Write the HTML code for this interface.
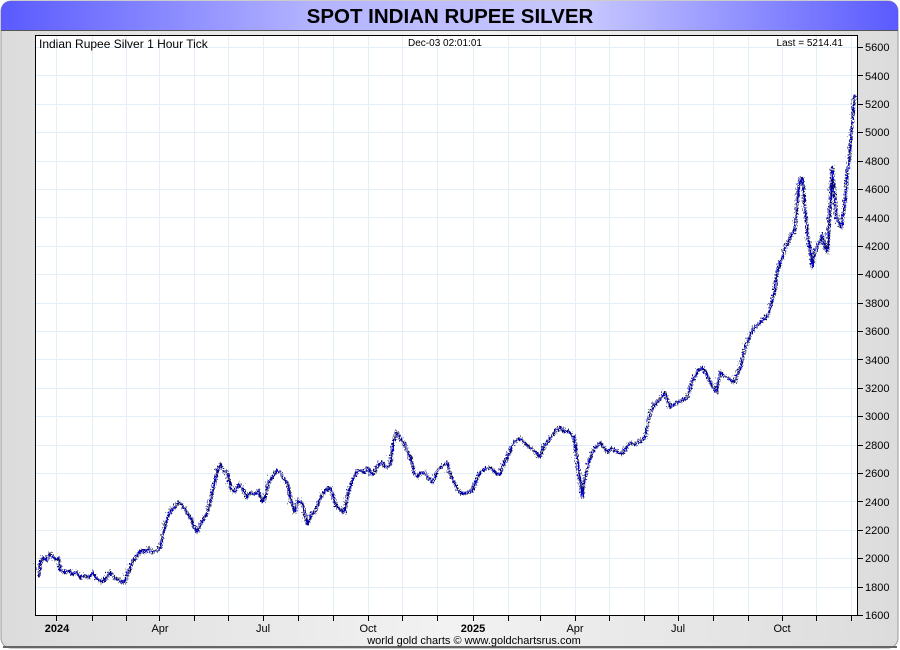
<!DOCTYPE html>
<html><head><meta charset="utf-8"><style>
html,body{margin:0;padding:0;width:900px;height:650px;overflow:hidden;background:#fff;font-family:"Liberation Sans",Arial,sans-serif}
</style></head><body>
<svg width="900" height="650" xmlns="http://www.w3.org/2000/svg" font-family="Liberation Sans, Arial, sans-serif">
<defs>
<linearGradient id="tb" x1="0" x2="1" y1="0" y2="0">
<stop offset="0" stop-color="#5a5aff"/><stop offset="0.35" stop-color="#b4b4ff"/><stop offset="0.65" stop-color="#c8c8ff"/><stop offset="1" stop-color="#5a5aff"/></linearGradient>
<linearGradient id="bg" x1="0" x2="1" y1="0" y2="0">
<stop offset="0" stop-color="#dcdcdc"/><stop offset="0.5" stop-color="#f2f2f2"/><stop offset="1" stop-color="#dcdcdc"/></linearGradient>
<filter id="jit" x="-5%" y="-10%" width="110%" height="120%">
<feTurbulence type="turbulence" baseFrequency="0.9 0.35" numOctaves="1" seed="3" result="n"/>
<feDisplacementMap in="SourceGraphic" in2="n" scale="7" xChannelSelector="R" yChannelSelector="G"/>
</filter>
<polyline id="p" points="36,575 38,560 41,555 44,558 47,552 50,553 53,557 56,555 58,567 62,570 66,568 70,572 74,570 78,576 82,573 86,575 90,570 94,576 98,578 100,580 104,575 108,570 112,575 116,578 122,580 126,570 130,560 134,555 138,548 142,550 146,546 150,550 154,548 158,545 161,530 165,515 169,508 172,505 176,500 180,502 184,510 188,515 192,525 195,530 199,520 205,510 209,495 212,480 215,468 218,462 221,468 225,470 228,485 232,490 236,482 240,485 244,495 248,490 252,492 256,488 260,500 262,497 266,480 270,475 274,468 278,470 282,478 285,480 289,500 292,510 296,498 300,500 303,515 305,522 309,512 312,510 316,500 320,492 324,488 328,485 331,495 335,505 339,508 342,510 346,490 350,478 354,470 358,468 362,470 365,465 369,472 372,470 376,462 380,460 384,465 388,462 391,440 395,430 399,438 402,440 405,450 408,455 412,470 415,475 419,470 422,470 426,476 430,480 434,470 438,465 442,462 445,460 448,472 452,480 456,488 460,492 465,490 470,488 474,478 478,470 483,466 488,465 492,470 497,472 501,462 505,455 509,445 512,440 516,436 520,438 524,442 528,445 533,450 538,455 541,445 545,440 549,434 552,430 555,428 558,425 562,430 565,428 569,432 572,435 575,460 578,480 580,495 582,478 585,465 588,455 590,450 594,444 598,440 602,446 605,450 609,446 612,448 616,450 620,452 624,445 628,440 632,442 636,440 640,438 643,435 645,422 648,410 652,402 655,400 659,395 662,390 665,398 668,405 671,402 675,400 680,398 685,395 689,382 692,375 696,368 700,365 704,372 708,380 711,385 714,390 716,378 718,370 722,374 725,375 729,378 732,380 735,372 738,365 741,352 745,340 749,330 752,325 756,322 760,318 763,315 766,312 769,300 772,290 775,270 778,258 780,255 783,245 786,240 789,232 792,230 794,210 796,185 798,178 800,175 802,200 805,230 808,250 810,265 812,250 815,245 818,238 820,232 822,242 825,250 828,200 830,165 832,190 834,215 836,220 839,225 841,210 843,195 845,170 847,155 849,125 850,120 851,105 852,95 853,93"/>
</defs>
<rect x="0" y="0" width="900" height="650" fill="#fff"/>
<rect x="1" y="1" width="897" height="647" rx="10" fill="url(#bg)" stroke="#999" stroke-width="1"/>
<path d="M1,648 L1,12 Q1,1 12,1 L887,1 Q898,1 898,12 L898,30 L1,30 Z" fill="url(#tb)"/>
<line x1="1" y1="30.5" x2="898" y2="30.5" stroke="#555" stroke-width="1"/>
<line x1="3" y1="647" x2="897" y2="647" stroke="#666" stroke-width="2"/>
<text x="450" y="23" text-anchor="middle" font-size="20.5" font-weight="bold" fill="#000">SPOT INDIAN RUPEE SILVER</text>
<rect x="35.5" y="35.5" width="822" height="580" fill="#fff"/>
<g stroke="#e2eef8" stroke-width="1">
<path d="M36,47.5H857M36,75.5H857M36,104.5H857M36,132.5H857M36,161.5H857M36,189.5H857M36,217.5H857M36,246.5H857M36,274.5H857M36,303.5H857M36,331.5H857M36,359.5H857M36,388.5H857M36,416.5H857M36,445.5H857M36,473.5H857M36,501.5H857M36,530.5H857M36,558.5H857M36,587.5H857"/>
<path d="M56.5,36V615M92.5,36V615M126.5,36V615M159.5,36V615M194.5,36V615M228.5,36V615M263.5,36V615M298.5,36V615M333.5,36V615M368.5,36V615M402.5,36V615M437.5,36V615M473.5,36V615M508.5,36V615M540.5,36V615M575.5,36V615M609.5,36V615M644.5,36V615M678.5,36V615M713.5,36V615M748.5,36V615M782.5,36V615M816.5,36V615M851.5,36V615"/>
</g>
<rect x="35.5" y="35.5" width="822" height="580" fill="none" stroke="#000" stroke-width="1"/>
<g stroke="#000" stroke-width="1">
<path d="M858,47.5h5M858,75.5h5M858,104.5h5M858,132.5h5M858,161.5h5M858,189.5h5M858,217.5h5M858,246.5h5M858,274.5h5M858,303.5h5M858,331.5h5M858,359.5h5M858,388.5h5M858,416.5h5M858,445.5h5M858,473.5h5M858,501.5h5M858,530.5h5M858,558.5h5M858,587.5h5M858,615.5h5"/>
<path d="M56.5,616v5M92.5,616v5M126.5,616v5M159.5,616v5M194.5,616v5M228.5,616v5M263.5,616v5M298.5,616v5M333.5,616v5M368.5,616v5M402.5,616v5M437.5,616v5M473.5,616v5M508.5,616v5M540.5,616v5M575.5,616v5M609.5,616v5M644.5,616v5M678.5,616v5M713.5,616v5M748.5,616v5M782.5,616v5M816.5,616v5M851.5,616v5"/>
</g>
<g font-size="11" fill="#000">
<text x="865" y="51">5600</text><text x="865" y="80">5400</text><text x="865" y="108">5200</text><text x="865" y="136">5000</text><text x="865" y="165">4800</text><text x="865" y="193">4600</text><text x="865" y="222">4400</text><text x="865" y="250">4200</text><text x="865" y="278">4000</text><text x="865" y="307">3800</text><text x="865" y="335">3600</text><text x="865" y="364">3400</text><text x="865" y="392">3200</text><text x="865" y="420">3000</text><text x="865" y="449">2800</text><text x="865" y="477">2600</text><text x="865" y="506">2400</text><text x="865" y="534">2200</text><text x="865" y="562">2000</text><text x="865" y="591">1800</text><text x="865" y="619">1600</text>
</g>
<g font-size="11" fill="#000" text-anchor="middle">
<text x="57" y="632" font-weight="bold">2024</text><text x="160" y="632">Apr</text><text x="263" y="632">Jul</text><text x="368" y="632">Oct</text><text x="473" y="632" font-weight="bold">2025</text><text x="575" y="632">Apr</text><text x="678" y="632">Jul</text><text x="782" y="632">Oct</text>
</g>
<text x="474" y="644" font-size="11" text-anchor="middle" fill="#000">world gold charts © www.goldchartsrus.com</text>
<text x="39" y="48" font-size="12" fill="#000">Indian Rupee Silver 1 Hour Tick</text>
<text x="445" y="46" font-size="10" text-anchor="middle" fill="#000">Dec-03  02:01:01</text>
<text x="843" y="46" font-size="10" text-anchor="end" fill="#000">Last = 5214.41</text>
<g fill="none" stroke-linejoin="round">
<use href="#p" stroke="#000" stroke-width="2.4" filter="url(#jit)"/>
<use href="#p" stroke="#0000ee" stroke-width="1.3" filter="url(#jit)"/>
</g>
</svg>
</body></html>
